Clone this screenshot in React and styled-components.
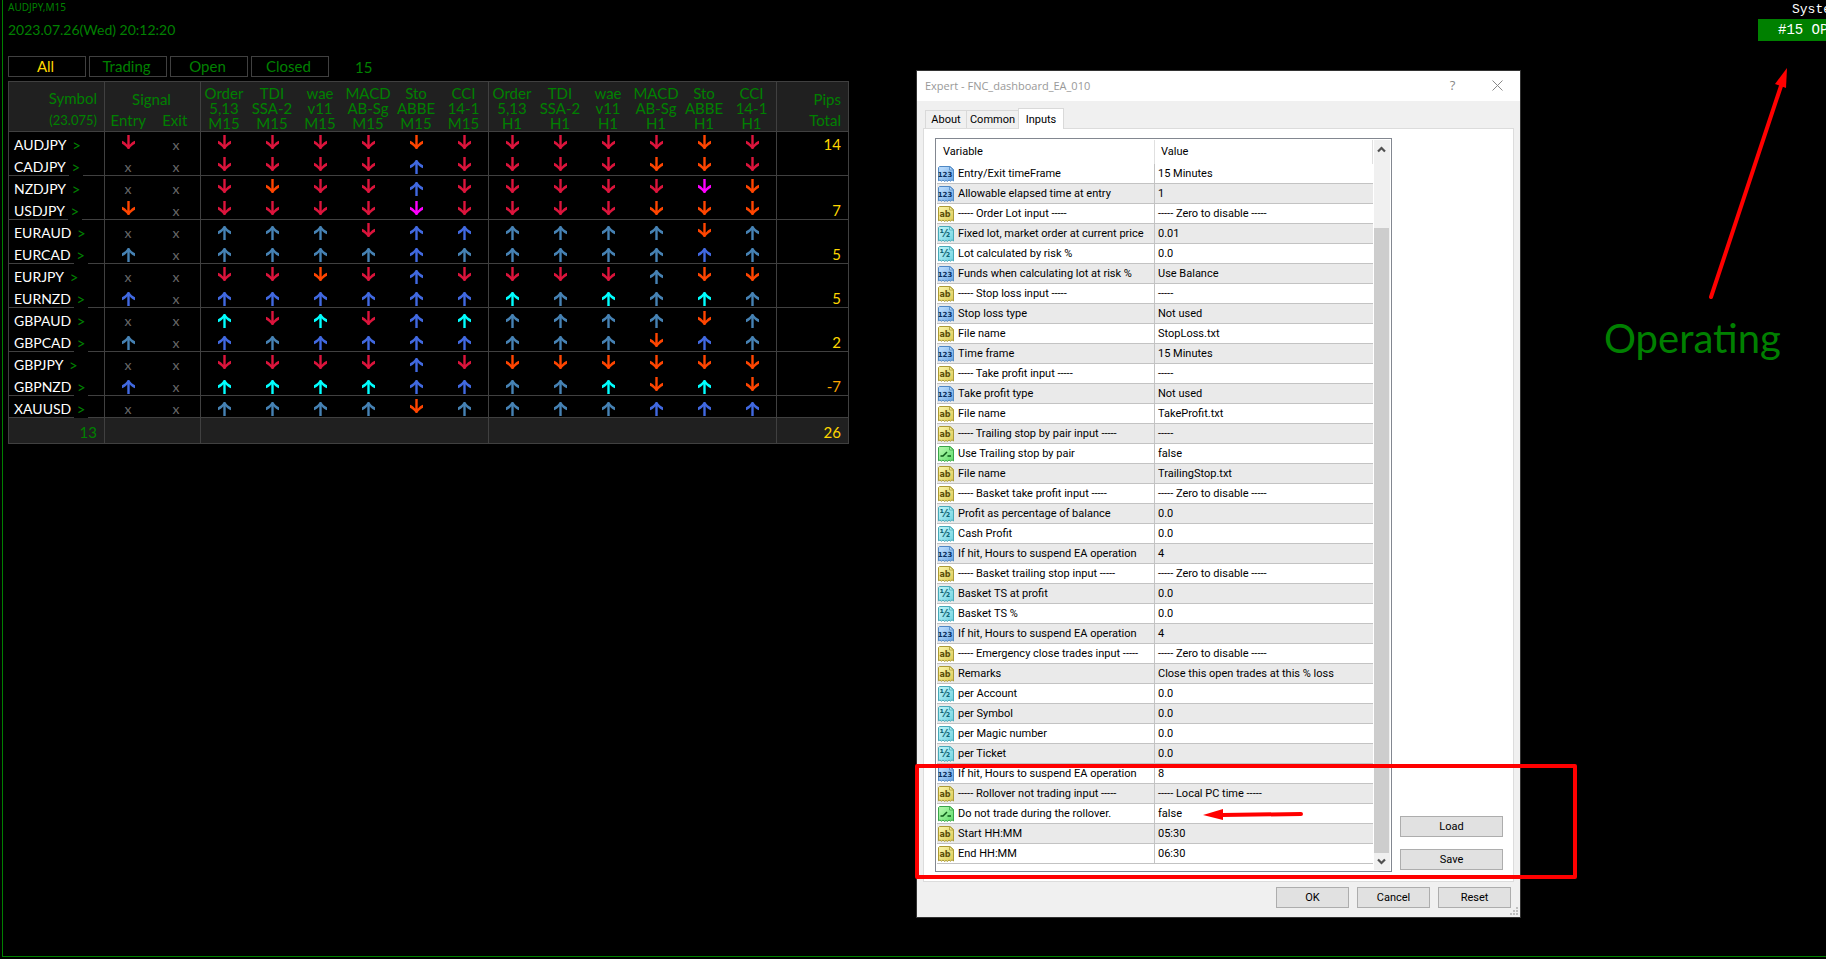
import React, { useState } from 'react';
import styled, { createGlobalStyle, css } from 'styled-components';

const GlobalStyle = createGlobalStyle`
  * {
    box-sizing: border-box;
  }

  body {
    margin: 0;
    background: #000;
    overflow: hidden;
  }

  button {
    margin: 0;
    padding: 0;
    font: inherit;
    cursor: pointer;
  }
`;

const green = '#008000';
const line = '#404040';

const Screen = styled.main`
  position: relative;
  min-height: 100vh;
  padding: 0 0 2px 2px;
  overflow: hidden;
  display: flex;
  background: #000;
`;

const Chart = styled.div`
  flex: 1;
  display: flex;
  justify-content: space-between;
  align-items: flex-start;
  padding-left: 5px;
  border-left: 1px solid ${green};
  border-bottom: 1px solid ${green};
  color: ${green};
  font-family: Lato, Carlito, sans-serif;
  font-size: 15px;
  line-height: 20px;
`;

const ChartName = styled.div`
  padding-top: 1px;
  font-family: 'Noto Sans', sans-serif;
  font-size: 10px;
  line-height: 13px;
`;

const Clock = styled.div`
  margin-top: 6px;
  font-size: 14px;
`;

const FilterBar = styled.div`
  display: flex;
  align-items: center;
  gap: 3px;
  margin: 16px 0 4px;
`;

const FilterButton = styled.button`
  width: 78px;
  height: 21px;
  padding-right: 3px;
  border: 1px solid ${line};
  background: #000;
  color: ${props => (props.$active ? '#ffd700' : green)};
  line-height: 19px;
`;

const Count = styled.span`
  margin-left: 23px;
`;

const Board = styled.table`
  width: 841px;
  table-layout: fixed;
  border-collapse: separate;
  border-spacing: 0;
  border-left: 1px solid ${line};
  border-top: 1px solid ${line};
`;

const cellBorders = css`
  border-right: ${props => (props.$edge ? `1px solid ${line}` : 'none')};
  border-bottom: ${props => (props.$ruled ? `1px solid ${line}` : 'none')};
`;

const HeadCell = styled.th`
  height: 50px;
  padding: ${props => (props.$right ? '0 7px 0 0' : '0 2px 0 0')};
  background: #202020;
  font-weight: normal;
  line-height: ${props => (props.$tall ? '21px' : '15px')};
  text-align: ${props => (props.$right ? 'right' : 'center')};
  white-space: pre-line;
  vertical-align: bottom;
  ${cellBorders}
`;

const Small = styled.span`
  font-size: 13px;
`;

const SignalHead = styled.div`
  display: grid;
  grid-template-columns: 1fr 1fr;
`;

const SignalTitle = styled.span`
  grid-column: 1 / 3;
`;

const Cell = styled.td`
  height: 22px;
  padding: 0 ${props => (props.$edge ? '1px' : '2px')} 0 0;
  color: #696969;
  line-height: 20px;
  text-align: center;
  vertical-align: top;
  ${cellBorders}
`;

const SymbolLine = styled.div`
  display: flex;
  height: 22px;
  margin-bottom: -1px;
  padding-left: 5px;
  color: #fff;
  font-size: 14px;
  line-height: 26px;
`;

const OpenButton = styled.button`
  width: 14px;
  height: 22px;
  margin-left: 3px;
  border: none;
  background: #000;
  color: ${green};
  font-size: 15px;
  line-height: 26px;
`;

const NoSignal = styled.span`
  display: block;
  height: 21px;
  line-height: 26px;
  font-size: 14px;
`;

const Pips = styled.td`
  height: 22px;
  padding: 4px 7px 0 0;
  color: ${props => (props.$negative ? '#ffa500' : '#ffd700')};
  line-height: 17px;
  text-align: right;
  vertical-align: top;
  ${cellBorders}
`;

const FootCell = styled.td`
  height: 26px;
  padding: 4px 7px 0 0;
  background: #202020;
  color: ${props => (props.$gold ? '#ffd700' : green)};
  line-height: 21px;
  text-align: right;
  ${cellBorders}
`;

const ArrowSvg = styled.svg`
  display: block;
  margin: ${props => (props.$up ? '6px auto 0' : '3px auto 0')};
`;

const Status = styled.aside`
  width: 68px;
  overflow: hidden;
  color: #fff;
  font-family: 'Liberation Mono', monospace;
  white-space: nowrap;
`;

const StatusTitle = styled.div`
  padding-left: 34px;
  font-size: 13px;
  line-height: 19px;
`;

const StatusBadge = styled.div`
  padding-left: 20px;
  background: ${green};
  font-size: 14px;
  line-height: 22px;
`;

/* expert properties window */

const Dialog = styled.section`
  position: absolute;
  left: 916px;
  top: 70px;
  width: 605px;
  border: 1px solid #333;
  background: #f0f0f0;
  color: #000;
  font-family: Roboto, 'Liberation Sans', sans-serif;
  font-size: 11px;
`;

const TitleBar = styled.header`
  display: flex;
  align-items: center;
  height: 30px;
  padding: 0 16px 2px 8px;
  background: #fff;
  color: #999;
  font-family: 'Open Sans', sans-serif;
`;

const TitleText = styled.h1`
  flex: 1;
  margin: 0;
  font-size: 11px;
  font-weight: normal;
`;

const TitleButton = styled.button`
  display: flex;
  align-items: center;
  justify-content: center;
  width: 45px;
  height: 28px;
  border: none;
  background: none;
  color: #888;
  font-size: 13px;

  &:last-child {
    width: 13px;
    margin-left: 16px;
  }
`;

const Tabs = styled.div`
  display: flex;
  align-items: flex-end;
  height: 27px;
  padding-left: 8px;
`;

const Tab = styled.button`
  width: ${props => props.$width}px;
  height: ${props => (props.$active ? '21px' : '18px')};
  margin-bottom: ${props => (props.$active ? '-1px' : '0')};
  border: 1px solid #d9d9d9;
  border-bottom: none;
  border-right-width: ${props => (props.$active ? '1px' : '0')};
  background: ${props => (props.$active ? '#fff' : '#f0f0f0')};
`;

const TabPage = styled.div`
  display: flex;
  gap: 8px;
  margin: 0 6px;
  padding: 9px 10px 9px 11px;
  border: 1px solid #dcdcdc;
  background: #fff;
`;

const ListBox = styled.div`
  flex: 1;
  display: flex;
  gap: 1px;
  height: 734px;
  padding: 1px;
  border: 1px solid #828790;
`;

const InputsTable = styled.table`
  flex: 1;
  width: 100%;
  align-self: flex-start;
  table-layout: fixed;
  border-collapse: separate;
  border-spacing: 0;
`;

const ColumnHead = styled.th`
  height: 24px;
  padding: 0 6px 1px;
  border-right: 1px solid #e0e0e0;
  font-weight: normal;
  text-align: left;
`;

const InputRow = styled.tr`
  background: #fff;

  &:nth-child(even) {
    background: #eaeaea;
  }
`;

const VariableCell = styled.td`
  height: 20px;
  padding: 0 0 0 1px;
  border-right: 1px solid #c3c3c3;
  border-bottom: 1px solid #c3c3c3;
`;

const VariableName = styled.div`
  display: flex;
  align-items: center;
  gap: 4px;
  height: 19px;
  white-space: nowrap;
`;

const ValueCell = styled.td`
  padding: 0 3px;
  border-bottom: 1px solid #c3c3c3;
  white-space: nowrap;
`;

const ScrollBar = styled.div`
  display: flex;
  flex-direction: column;
  align-items: center;
  flex-shrink: 0;
  width: 16px;
  padding-bottom: 1px;
  background: #f0f0f0;
`;

const ScrollThumb = styled.div`
  flex: 1;
  width: 15px;
  margin: 70px 1px 0 0;
  background: #cdcdcd;
`;

const SideButtons = styled.div`
  display: flex;
  flex-direction: column;
  justify-content: flex-end;
  gap: 12px;
  width: 103px;
  padding-bottom: 2px;
`;

const PushButton = styled.button`
  min-width: 73px;
  height: 21px;
  border: 1px solid #adadad;
  background: #e1e1e1;
  color: #000;
`;

const DialogFooter = styled.footer`
  display: flex;
  justify-content: flex-end;
  gap: 8px;
  height: 35px;
  padding: 5px 9px 0;
`;

const Grip = styled.svg`
  position: absolute;
  right: 2px;
  bottom: 2px;
`;

/* marks drawn over the desktop */

const Highlight = styled.div`
  position: absolute;
  left: 915px;
  top: 764px;
  width: 662px;
  height: 115px;
  border: 4px solid #f00;
  border-radius: 2px;
  pointer-events: none;
`;

const Marks = styled.svg`
  position: absolute;
  left: 0;
  top: 0;
  pointer-events: none;
`;

const Note = styled.div`
  position: absolute;
  left: 1604px;
  top: 314px;
  color: ${green};
  font-family: Lato, Carlito, sans-serif;
  font-size: 40px;
  line-height: 48px;
`;

const filters = ['All', 'Trading', 'Open', 'Closed'];

const tabs = [
  { name: 'About', width: 41 },
  { name: 'Common', width: 52 },
  { name: 'Inputs', width: 46 },
];

const indicators = ['Order\n5,13', 'TDI\nSSA-2', 'wae\nv11', 'MACD\nAB-Sg', 'Sto\nABBE', 'CCI\n14-1'];

// c, o, m point down; s, r, a point up
const arrowColors = {
  c: '#dc143c',
  o: '#ff4500',
  m: '#ff00ff',
  s: '#4682b4',
  r: '#4169e1',
  a: '#00ffff',
};

const pairs = [
  { symbol: 'AUDJPY', entry: 'c', signals: 'ccccocccccoc', pips: '14' },
  { symbol: 'CADJPY', entry: 'x', signals: 'ccccrccccooc', pips: '' },
  { symbol: 'NZDJPY', entry: 'x', signals: 'coccrcccccmo', pips: '' },
  { symbol: 'USDJPY', entry: 'o', signals: 'ccccmccccooo', pips: '7' },
  { symbol: 'EURAUD', entry: 'x', signals: 'ssscrrssssos', pips: '' },
  { symbol: 'EURCAD', entry: 's', signals: 'ssssrsssssrs', pips: '5' },
  { symbol: 'EURJPY', entry: 'x', signals: 'ccocrccccsoo', pips: '' },
  { symbol: 'EURNZD', entry: 'r', signals: 'rrrrrrasasas', pips: '5' },
  { symbol: 'GBPAUD', entry: 'x', signals: 'acacrassssos', pips: '' },
  { symbol: 'GBPCAD', entry: 's', signals: 'rsrrrrsssors', pips: '2' },
  { symbol: 'GBPJPY', entry: 'x', signals: 'ccccrcoooooo', pips: '' },
  { symbol: 'GBPNZD', entry: 'r', signals: 'aaaarrssaoao', pips: '-7' },
  { symbol: 'XAUUSD', entry: 'x', signals: 'ssssossssrrr', pips: '' },
];

const inputs = [
  ['int', 'Entry/Exit timeFrame', '15 Minutes'],
  ['int', 'Allowable elapsed time at entry', '1'],
  ['str', '----- Order Lot input -----', '----- Zero to disable -----'],
  ['dbl', 'Fixed lot, market order at current price', '0.01'],
  ['dbl', 'Lot calculated by risk %', '0.0'],
  ['int', 'Funds when calculating lot at risk %', 'Use Balance'],
  ['str', '----- Stop loss input -----', '-----'],
  ['int', 'Stop loss type', 'Not used'],
  ['str', 'File name', 'StopLoss.txt'],
  ['int', 'Time frame', '15 Minutes'],
  ['str', '----- Take profit input -----', '-----'],
  ['int', 'Take profit type', 'Not used'],
  ['str', 'File name', 'TakeProfit.txt'],
  ['str', '----- Trailing stop by pair input -----', '-----'],
  ['bool', 'Use Trailing stop by pair', 'false'],
  ['str', 'File name', 'TrailingStop.txt'],
  ['str', '----- Basket take profit input -----', '----- Zero to disable -----'],
  ['dbl', 'Profit as percentage of balance', '0.0'],
  ['dbl', 'Cash Profit', '0.0'],
  ['int', 'If hit, Hours to suspend EA operation', '4'],
  ['str', '----- Basket trailing stop input -----', '----- Zero to disable -----'],
  ['dbl', 'Basket TS at profit', '0.0'],
  ['dbl', 'Basket TS %', '0.0'],
  ['int', 'If hit, Hours to suspend EA operation', '4'],
  ['str', '----- Emergency close trades input -----', '----- Zero to disable -----'],
  ['str', 'Remarks', 'Close this open trades at this % loss'],
  ['dbl', 'per Account', '0.0'],
  ['dbl', 'per Symbol', '0.0'],
  ['dbl', 'per Magic number', '0.0'],
  ['dbl', 'per Ticket', '0.0'],
  ['int', 'If hit, Hours to suspend EA operation', '8'],
  ['str', '----- Rollover not trading input -----', '----- Local PC time -----'],
  ['bool', 'Do not trade during the rollover.', 'false'],
  ['str', 'Start HH:MM', '05:30'],
  ['str', 'End HH:MM', '06:30'],
];

const typeIcons = {
  int: { light: '#b5d8fb', dark: '#6aa5e3', edge: '#4f88c4', ink: '#0b2f5c', label: '123', size: 7 },
  dbl: { light: '#b4f0f6', dark: '#6fd0de', edge: '#48a9b8', ink: '#0f6475', label: '½', size: 10 },
  str: { light: '#f6efa0', dark: '#dcc953', edge: '#ab9a35', ink: '#5a4d08', label: 'ab', size: 8 },
  bool: { light: '#a9f5a5', dark: '#5fdc6b', edge: '#3aa548', ink: '#0c5a18', label: '', size: 8 },
};

function Arrow({ kind }) {
  const up = 'sra'.includes(kind);
  return (
    <ArrowSvg $up={up} width="13" height="14" viewBox="0 0 13 14" aria-hidden="true">
      <path
        transform={up ? 'rotate(180 6.5 7)' : undefined}
        fill={arrowColors[kind]}
        d="M5.3 0h2.4v9.8C8.8 8.2 10.5 6.6 13 5.7V8.7C10.7 9.8 8.6 11.6 7.3 14H5.7C4.4 11.6 2.3 9.8 0 8.7V5.7C2.5 6.6 4.2 8.2 5.3 9.8z"
      />
    </ArrowSvg>
  );
}

function TypeIcon({ type }) {
  const icon = typeIcons[type];
  return (
    <svg width="16" height="16" viewBox="0 0 16 16" aria-hidden="true">
      <defs>
        <linearGradient id={`fill-${type}`} x1="0" y1="0" x2="1" y2="1">
          <stop offset="0.2" stopColor={icon.light} />
          <stop offset="1" stopColor={icon.dark} />
        </linearGradient>
      </defs>
      <path
        d="M1.5.5H12L15.5 3.5V15L14 13.8L12.5 15.2L11 14L9.5 15.4L8 14.4L6.5 15.4L5 14L3.5 15.2L2 14L.5 14.8V1.5z"
        fill={`url(#fill-${type})`}
        stroke={icon.edge}
      />
      <path d="M11.5.5V4H15.5z" fill={icon.light} stroke={icon.edge} strokeWidth="0.8" />
      {type === 'bool' ? (
        <path d="M2.5 10H5L9 6M9.5 10H13" fill="none" stroke={icon.ink} strokeWidth="1.5" />
      ) : (
        <text
          x="7"
          y="11"
          fill={icon.ink}
          fontFamily="'DejaVu Sans', sans-serif"
          fontSize={icon.size}
          fontWeight="bold"
          textAnchor="middle"
        >
          {icon.label}
        </text>
      )}
    </svg>
  );
}

function SignalCell({ kind, edge, ruled }) {
  return (
    <Cell $edge={edge} $ruled={ruled}>
      {kind === 'x' ? <NoSignal>x</NoSignal> : <Arrow kind={kind} />}
    </Cell>
  );
}

function Dashboard() {
  const [filter, setFilter] = useState('All');

  return (
    <div>
      <ChartName>AUDJPY,M15</ChartName>
      <Clock>2023.07.26(Wed) 20:12:20</Clock>
      <FilterBar>
        {filters.map(name => (
          <FilterButton key={name} type="button" $active={name === filter} onClick={() => setFilter(name)}>
            {name}
          </FilterButton>
        ))}
        <Count>15</Count>
      </FilterBar>
      <Board>
        <colgroup>
          <col style={{ width: 96 }} />
          {Array.from({ length: 14 }, (_, i) => (
            <col key={i} style={{ width: 48 }} />
          ))}
          <col style={{ width: 72 }} />
        </colgroup>
        <thead>
          <tr>
            <HeadCell $right $tall $edge $ruled>
              Symbol
              <br />
              <Small>(23.075)</Small>
            </HeadCell>
            <HeadCell colSpan={2} $tall $edge $ruled>
              <SignalHead>
                <SignalTitle>Signal</SignalTitle>
                <span>Entry</span>
                <span>Exit</span>
              </SignalHead>
            </HeadCell>
            {['M15', 'H1'].map(frame =>
              indicators.map((name, i) => (
                <HeadCell key={frame + name} $edge={i === 5} $ruled>
                  {`${name}\n${frame}`}
                </HeadCell>
              ))
            )}
            <HeadCell $right $tall $edge $ruled>
              Pips
              <br />
              Total
            </HeadCell>
          </tr>
        </thead>
        <tbody>
          {pairs.map(({ symbol, entry, signals, pips }, row) => {
            const ruled = row % 2 === 1 || row === pairs.length - 1;
            return (
              <tr key={symbol}>
                <Cell $edge $ruled={ruled}>
                  <SymbolLine>
                    {symbol}
                    <OpenButton type="button" aria-label={`Open ${symbol}`}>&gt;</OpenButton>
                  </SymbolLine>
                </Cell>
                <SignalCell kind={entry} ruled={ruled} />
                <SignalCell kind="x" edge ruled={ruled} />
                {signals.split('').map((kind, i) => (
                  <SignalCell key={i} kind={kind} edge={i % 6 === 5} ruled={ruled} />
                ))}
                <Pips $edge $ruled={ruled} $negative={pips.startsWith('-')}>{pips}</Pips>
              </tr>
            );
          })}
        </tbody>
        <tfoot>
          <tr>
            <FootCell $edge $ruled>13</FootCell>
            <FootCell colSpan={2} $edge $ruled />
            <FootCell colSpan={6} $edge $ruled />
            <FootCell colSpan={6} $edge $ruled />
            <FootCell $gold $edge $ruled>26</FootCell>
          </tr>
        </tfoot>
      </Board>
    </div>
  );
}

function ExpertDialog() {
  const [tab, setTab] = useState('Inputs');

  return (
    <Dialog role="dialog" aria-labelledby="expert-title">
      <TitleBar>
        <TitleText id="expert-title">Expert - FNC_dashboard_EA_010</TitleText>
        <TitleButton type="button">?</TitleButton>
        <TitleButton type="button" aria-label="Close">
          <svg width="11" height="11" viewBox="0 0 11 11">
            <path d="M.5.5l10 10M10.5.5l-10 10" stroke="#888" fill="none" />
          </svg>
        </TitleButton>
      </TitleBar>
      <Tabs role="tablist">
        {tabs.map(({ name, width }) => (
          <Tab
            key={name}
            type="button"
            role="tab"
            aria-selected={name === tab}
            $active={name === tab}
            $width={width}
            onClick={() => setTab(name)}
          >
            {name}
          </Tab>
        ))}
      </Tabs>
      <TabPage>
        <ListBox>
          <InputsTable>
            <thead>
              <tr>
                <ColumnHead>Variable</ColumnHead>
                <ColumnHead>Value</ColumnHead>
              </tr>
            </thead>
            <tbody>
              {inputs.map(([type, name, value], i) => (
                <InputRow key={i}>
                  <VariableCell>
                    <VariableName>
                      <TypeIcon type={type} />
                      {name}
                    </VariableName>
                  </VariableCell>
                  <ValueCell>{value}</ValueCell>
                </InputRow>
              ))}
            </tbody>
          </InputsTable>
          <ScrollBar>
            <svg width="16" height="18" viewBox="0 0 16 18">
              <path d="M4 11.5L7.5 8L11 11.5" stroke="#505050" strokeWidth="2.2" fill="none" />
            </svg>
            <ScrollThumb />
            <svg width="16" height="16" viewBox="0 0 16 16">
              <path d="M4 6.5L7.5 10L11 6.5" stroke="#505050" strokeWidth="2.2" fill="none" />
            </svg>
          </ScrollBar>
        </ListBox>
        <SideButtons>
          <PushButton type="button">Load</PushButton>
          <PushButton type="button">Save</PushButton>
        </SideButtons>
      </TabPage>
      <DialogFooter>
        <PushButton type="button">OK</PushButton>
        <PushButton type="button">Cancel</PushButton>
        <PushButton type="button">Reset</PushButton>
      </DialogFooter>
      <Grip width="8" height="8" viewBox="0 0 8 8" fill="#bfbfbf">
        <path d="M6 0h2v2H6zM3 3h2v2H3zM6 3h2v2H6zM0 6h2v2H0zM3 6h2v2H3zM6 6h2v2H6z" />
      </Grip>
    </Dialog>
  );
}

function App() {
  return (
    <Screen>
      <GlobalStyle />
      <Chart>
        <Dashboard />
        <Status>
          <StatusTitle>Syste</StatusTitle>
          <StatusBadge>#15 OP</StatusBadge>
        </Status>
      </Chart>
      <ExpertDialog />
      <Note>Operating</Note>
      <Highlight />
      <Marks width="1826" height="959" viewBox="0 0 1826 959" fill="#f00" stroke="#f00">
        <path d="M1711 297L1781 86" strokeWidth="4" strokeLinecap="round" />
        <path d="M1787 68L1775 84L1786 88z" stroke="none" />
        <path d="M1222 815L1301 814" strokeWidth="4" strokeLinecap="round" />
        <path d="M1203 815L1223 809V820z" stroke="none" />
      </Marks>
    </Screen>
  );
}

export default App;
